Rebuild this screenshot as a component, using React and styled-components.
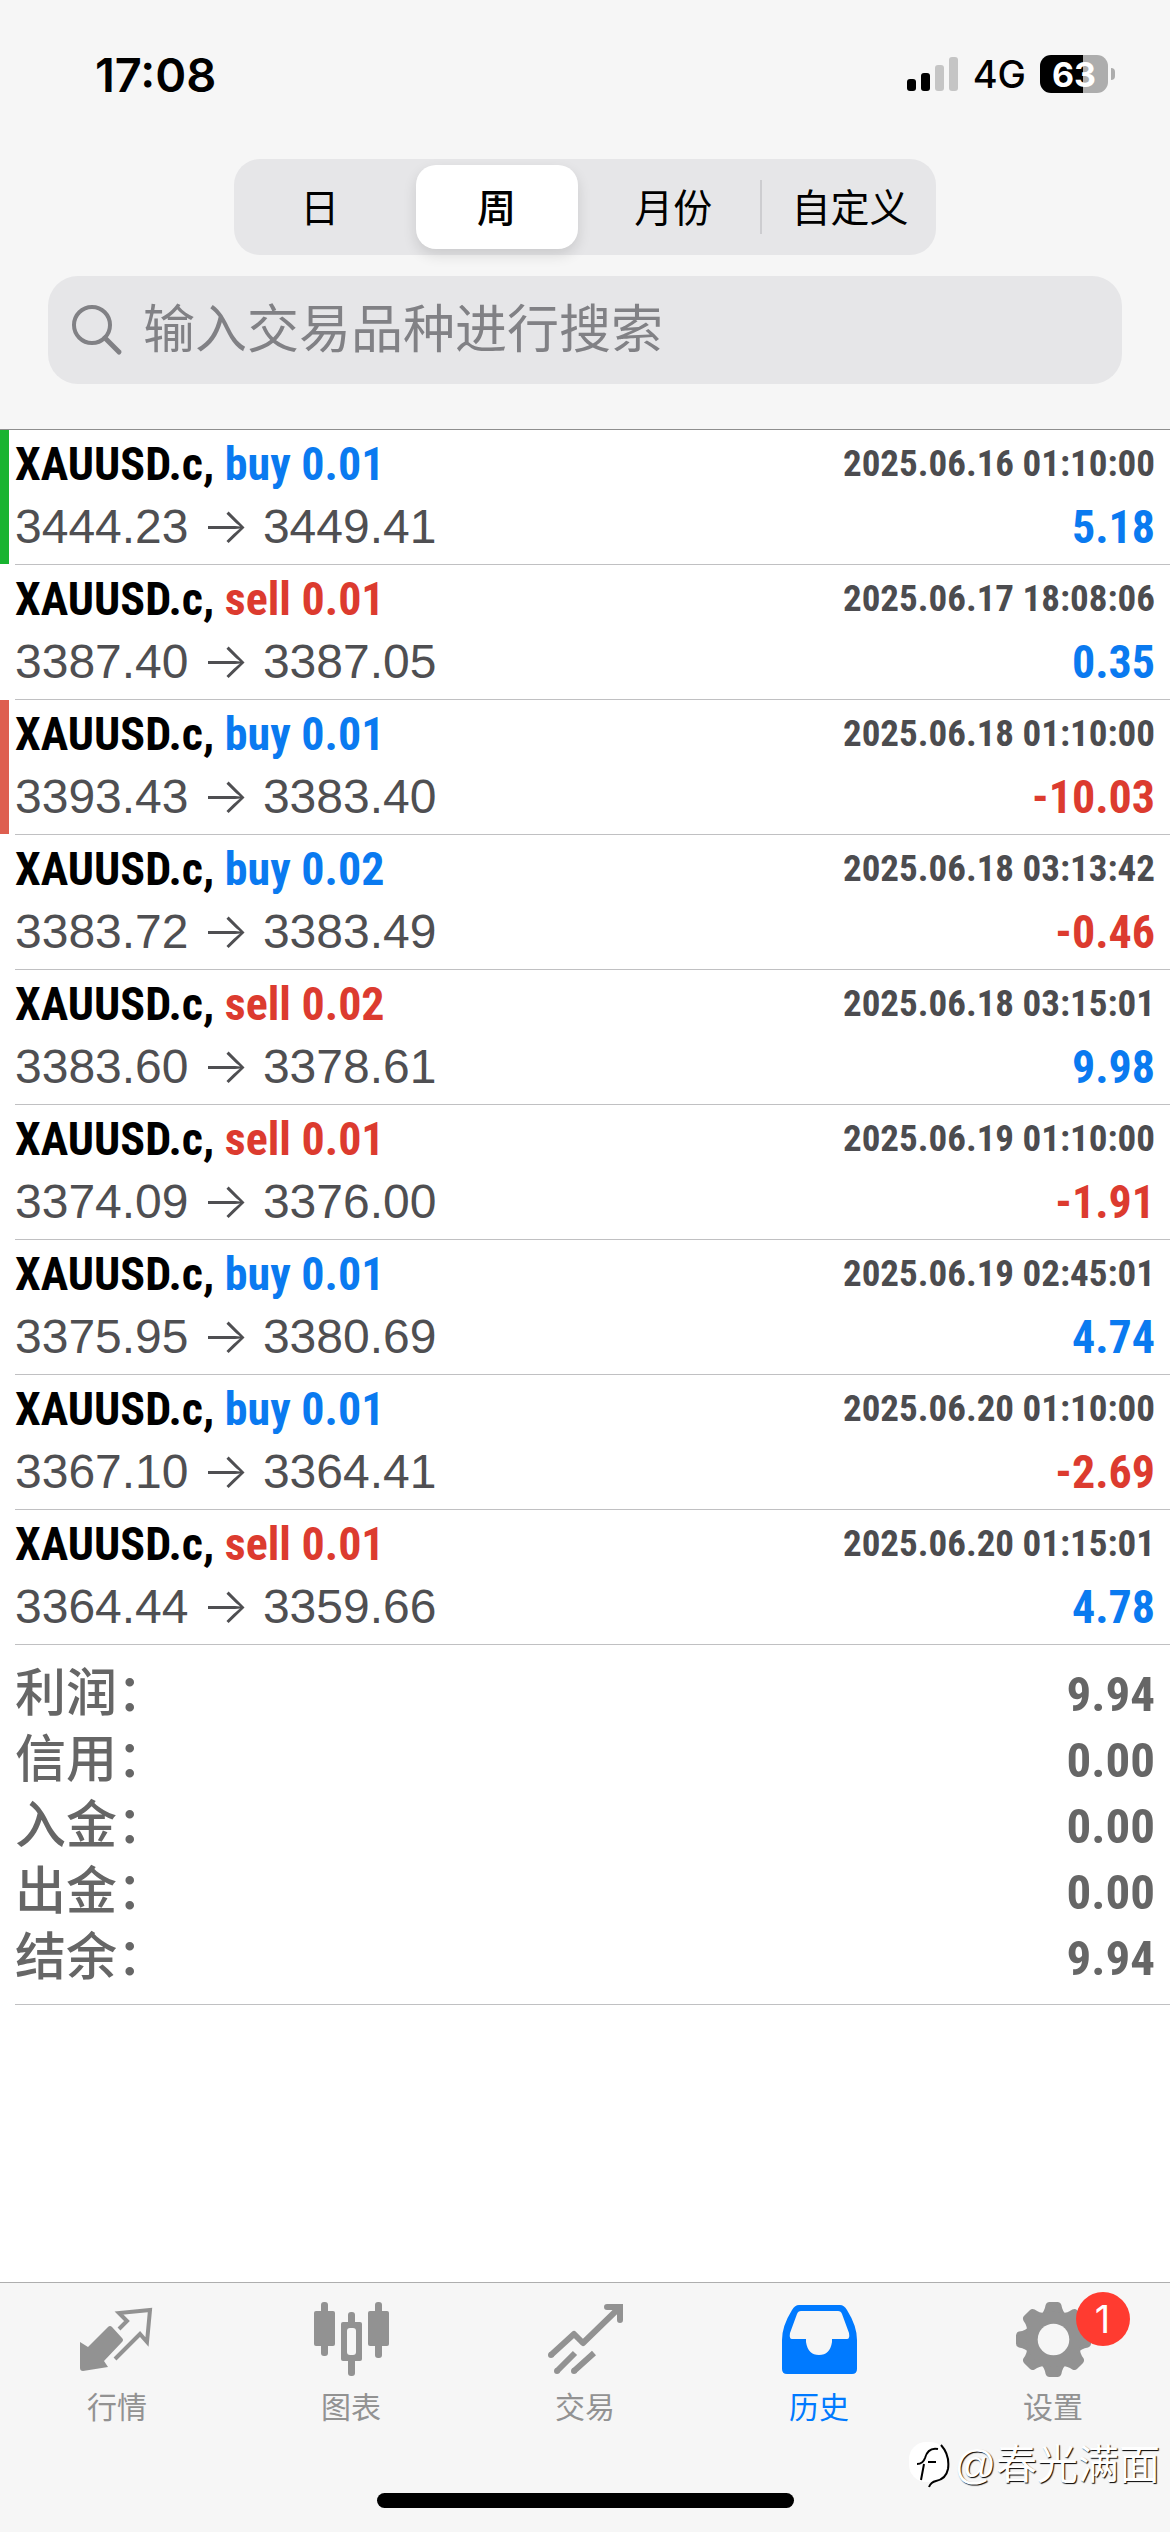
import React, { useState } from "react";
import styled, { createGlobalStyle, css } from "styled-components";

const GlobalStyle = createGlobalStyle`
  * {
    box-sizing: border-box;
  }

  body {
    margin: 0;
    background-color: white;
    font-family: "Liberation Sans", "Noto Sans CJK SC", sans-serif;
  }

  button,
  input {
    font-family: inherit;
    border: none;
    padding: 0;
    margin: 0;
    background: none;
  }
`;

const BLUE = "#0a7af0";
const RED = "#dc3b2f";

const condensed = css`
  font-family: "Roboto Condensed", "Liberation Sans", sans-serif;
  font-weight: 700;
`;

const Page = styled.div`
  position: relative;
  display: flex;
  flex-direction: column;
  min-height: 100vh;
`;

const Header = styled.header`
  background-color: #f6f6f6;
  border-bottom: 1px solid #8e8e8e;
  padding-bottom: 45px;
`;

const StatusBar = styled.div`
  display: flex;
  align-items: center;
  justify-content: space-between;
  height: 148px;
  padding: 0 55px 0 95px;
  font-family: Inter, sans-serif;
`;

const Clock = styled.time`
  font-size: 47px;
  font-weight: 600;
`;

const StatusIcons = styled.div`
  display: flex;
  align-items: center;
  gap: 14px;
`;

const Network = styled.span`
  font-size: 38px;
  font-weight: 500;
`;

const Battery = styled.div`
  display: flex;
  align-items: center;
  gap: 3px;

  &::after {
    content: "";
    width: 4px;
    height: 12px;
    border-radius: 0 6px 6px 0;
    background-color: #adadad;
  }
`;

const BatteryBody = styled.div`
  display: flex;
  align-items: center;
  justify-content: center;
  width: 68px;
  height: 38px;
  border-radius: 11px;
  background: linear-gradient(to right, black 63%, #adadad 63%);
  color: white;
  font-size: 34px;
  font-weight: 700;
`;

const Segments = styled.div`
  display: grid;
  grid-template-columns: repeat(4, 1fr);
  gap: 15px;
  width: 60%;
  height: 96px;
  margin: 11px auto 21px;
  padding: 6px 5px;
  border-radius: 26px;
  background-color: #e6e6e8;
`;

const Segment = styled.button`
  position: relative;
  padding-bottom: 4px;
  border-radius: 20px;
  font-size: 39px;
  white-space: nowrap;
  color: black;
  cursor: pointer;

  ${({ $divided }) =>
    $divided &&
    css`
      &::before {
        content: "";
        position: absolute;
        top: 15px;
        left: -9px;
        width: 2px;
        height: 54px;
        background-color: #cdcdd0;
      }
    `}

  ${({ $active }) =>
    $active &&
    css`
      background: white;
      font-weight: 500;
      box-shadow: 0 6px 14px rgba(0, 0, 0, 0.12);
    `}
`;

const SearchBox = styled.label`
  display: flex;
  align-items: center;
  gap: 20px;
  height: 108px;
  margin: 0 48px;
  padding: 0 23px;
  border-radius: 30px;
  background-color: #e6e6e8;
`;

const SearchInput = styled.input`
  flex: 1;
  min-width: 0;
  font-size: 52px;
  outline: none;

  &::placeholder {
    color: #818185;
    opacity: 1;
  }
`;

const DealList = styled.ul`
  margin: 0;
  padding: 0;
  list-style: none;
`;

const Deal = styled.li`
  display: flex;
  height: 135px;
`;

const Marker = styled.span`
  width: 9px;
  margin-right: 6px;
  margin-bottom: 1px;
  background-color: ${({ $color }) => $color || "transparent"};
`;

const DealBody = styled.div`
  flex: 1;
  padding: 2px 15px 0 0;
  border-bottom: 1px solid #c0c0c2;
`;

const Line = styled.div`
  display: flex;
  align-items: center;
  justify-content: space-between;
  height: 63px;
`;

const Symbol = styled.span`
  ${condensed}
  font-size: 46px;
`;

const Side = styled.span`
  color: ${({ $side }) => ($side === "buy" ? BLUE : RED)};
`;

const DealTime = styled.time`
  ${condensed}
  font-size: 37px;
  color: #4c4c4f;
`;

const Prices = styled.span`
  font-size: 48px;
  line-height: 56px;
  color: #4f4f52;
`;

const Arrow = styled.span`
  font-family: Inter, sans-serif;
  font-size: 50px;
  font-weight: 300;
  line-height: 1;
`;

const Profit = styled.span`
  ${condensed}
  font-size: 46px;
  color: ${({ $loss }) => ($loss ? RED : BLUE)};
`;

const Summary = styled.dl`
  margin: 0 0 0 15px;
  padding: 16px 15px 13px 0;
  border-bottom: 1px solid #c0c0c2;
`;

const SummaryRow = styled.div`
  display: flex;
  align-items: center;
  justify-content: space-between;
  height: 66px;
  color: #666;
`;

const SummaryLabel = styled.dt`
  font-size: 51px;
  font-weight: 500;
  line-height: 66px;
`;

const SummaryValue = styled.dd`
  ${condensed}
  margin: 0;
  font-size: 49px;
`;

const Footer = styled.footer`
  margin-top: auto;
  padding-bottom: 24px;
  border-top: 1px solid #aeaeae;
  background-color: #f6f6f6;
`;

const Tabs = styled.nav`
  display: grid;
  grid-template-columns: repeat(5, 1fr);
  height: 210px;
`;

const Tab = styled.button`
  display: flex;
  flex-direction: column;
  align-items: center;
  gap: 9px;
  padding-top: 19px;
  font-size: 30px;
  line-height: 44px;
  color: ${({ $active }) => ($active ? "#007aff" : "#929292")};
  cursor: pointer;
`;

const TabIcon = styled.span`
  position: relative;
  height: 75px;

  svg {
    display: block;
  }
`;

const Badge = styled.span`
  position: absolute;
  top: -10px;
  left: 60px;
  width: 54px;
  height: 54px;
  border-radius: 50%;
  background-color: #ff3b30;
  color: white;
  font-family: Inter, sans-serif;
  font-size: 38px;
  line-height: 54px;
  text-align: center;
`;

const HomeBar = styled.div`
  width: 417px;
  height: 15px;
  margin: 0 auto;
  border-radius: 8px;
  background-color: black;
`;

const Watermark = styled.div`
  position: absolute;
  right: 10px;
  bottom: 39px;
  display: flex;
  align-items: center;
  gap: 4px;
  color: white;
  font-size: 41px;
  line-height: 56px;
  text-shadow: 1px 1px 1px black;
`;

const SignalIcon = () => (
  <svg width="52" height="36" viewBox="0 0 52 36">
    <rect x="0" y="23" width="9" height="12" rx="3" />
    <rect x="14" y="17" width="9" height="18" rx="3" />
    <rect x="28" y="9" width="9" height="26" rx="3" fill="#c5c5c5" />
    <rect x="42" y="1" width="9" height="34" rx="3" fill="#c5c5c5" />
  </svg>
);

const SearchIcon = () => (
  <svg width="52" height="52" viewBox="0 0 52 52" fill="none" stroke="#818185">
    <circle cx="21" cy="21" r="18" strokeWidth="4" />
    <path d="M34 34 48 48" strokeWidth="5" strokeLinecap="round" />
  </svg>
);

const QuotesIcon = () => (
  <svg width="75" height="75" viewBox="0 0 75 75" fill="none">
    <path
      d="M0 40 8 45 28 25Q30 23 32 25L42 36Q44 38 42 40L24 59 28 65 3 69Q0 69 0 66Z"
      fill="currentColor"
    />
    <path
      d="M39 27 47 19 39 11 70 8 67 40 60 32 35 57"
      stroke="currentColor"
      strokeWidth="4"
    />
  </svg>
);

const ChartIcon = () => (
  <svg width="75" height="75" viewBox="0 0 75 75" fill="currentColor">
    <rect x="7" y="0" width="7" height="54" rx="3" />
    <rect x="0" y="9" width="21" height="35" rx="2" />
    <rect x="61" y="0" width="7" height="56" rx="3" />
    <rect x="54" y="9" width="21" height="35" rx="2" />
    <rect x="34" y="10" width="7" height="64" rx="3" />
    <rect x="27" y="20" width="21" height="39" rx="2" />
    <rect x="33" y="26" width="9" height="27" rx="3" fill="#f6f6f6" />
  </svg>
);

const TradeIcon = () => (
  <svg
    width="75"
    height="75"
    viewBox="0 0 75 75"
    fill="none"
    stroke="currentColor"
    strokeWidth="6"
  >
    <path d="M3 53 26 32 35 41 70 7" strokeLinejoin="round" />
    <path d="M59 5H72V18" strokeLinecap="round" />
    <circle cx="3" cy="53" r="3" fill="currentColor" stroke="none" />
    <path d="M9 69 27 51M26 69 46 51" />
    <circle cx="9" cy="69" r="3" fill="currentColor" stroke="none" />
    <circle cx="26" cy="69" r="3" fill="currentColor" stroke="none" />
  </svg>
);

const HistoryIcon = () => (
  <svg width="75" height="75" viewBox="0 0 75 75">
    <path
      fill="currentColor"
      fillRule="evenodd"
      d="M17 3H58Q62 3 65 8 75 24 75 38V67Q75 72 70 72H5Q0 72 0 67V38Q0 24 10 8 13 3 17 3ZM19 9Q16 9 15 12L8 31Q7 37 10 37H24V40Q26 53 37 53 48 53 50 40V37H65Q68 37 67 31L60 12Q59 9 56 9Z"
    />
  </svg>
);

const SettingsIcon = () => (
  <svg width="75" height="75" viewBox="0 0 76 76">
    <g fill="currentColor">
      {[0, 45, 90, 135, 180, 225, 270, 315].map((angle) => (
        <path
          key={angle}
          transform={`rotate(${angle} 38 38)`}
          d="M24 14Q29 10 30 3 31 0 34 0H42Q45 0 46 3 47 10 52 14L38 38Z"
        />
      ))}
      <circle cx="38" cy="38" r="28" />
    </g>
    <circle cx="38" cy="38" r="16" fill="#f6f6f6" />
  </svg>
);

const WatermarkIcon = () => (
  <svg width="42" height="48" viewBox="0 0 42 48" fill="none">
    <rect x="1" y="1" width="38" height="40" rx="17" fill="white" />
    <g stroke="black" strokeWidth="2">
      <path d="M30 8Q20 6 17 17 15 23 9 23M16 23 13 39M20 21H28" />
      <path d="M33 4Q42 14 40 28 38 38 28 40 23 41 21 46" />
    </g>
  </svg>
);

const periods = ["日", "周", "月份", "自定义"];

const deals = [
  { side: "buy", lots: "0.01", open: "3444.23", close: "3449.41", time: "2025.06.16 01:10:00", profit: "5.18", marker: "#19b431" },
  { side: "sell", lots: "0.01", open: "3387.40", close: "3387.05", time: "2025.06.17 18:08:06", profit: "0.35" },
  { side: "buy", lots: "0.01", open: "3393.43", close: "3383.40", time: "2025.06.18 01:10:00", profit: "-10.03", marker: "#de5f50" },
  { side: "buy", lots: "0.02", open: "3383.72", close: "3383.49", time: "2025.06.18 03:13:42", profit: "-0.46" },
  { side: "sell", lots: "0.02", open: "3383.60", close: "3378.61", time: "2025.06.18 03:15:01", profit: "9.98" },
  { side: "sell", lots: "0.01", open: "3374.09", close: "3376.00", time: "2025.06.19 01:10:00", profit: "-1.91" },
  { side: "buy", lots: "0.01", open: "3375.95", close: "3380.69", time: "2025.06.19 02:45:01", profit: "4.74" },
  { side: "buy", lots: "0.01", open: "3367.10", close: "3364.41", time: "2025.06.20 01:10:00", profit: "-2.69" },
  { side: "sell", lots: "0.01", open: "3364.44", close: "3359.66", time: "2025.06.20 01:15:01", profit: "4.78" },
];

const summary = [
  ["利润", "9.94"],
  ["信用", "0.00"],
  ["入金", "0.00"],
  ["出金", "0.00"],
  ["结余", "9.94"],
];

const tabs = [
  { label: "行情", Icon: QuotesIcon },
  { label: "图表", Icon: ChartIcon },
  { label: "交易", Icon: TradeIcon },
  { label: "历史", Icon: HistoryIcon },
  { label: "设置", Icon: SettingsIcon, badge: 1 },
];

function DealRow({ deal }) {
  return (
    <Deal>
      <Marker $color={deal.marker} />
      <DealBody>
        <Line>
          <Symbol>
            XAUUSD.c,{" "}
            <Side $side={deal.side}>
              {deal.side} {deal.lots}
            </Side>
          </Symbol>
          <DealTime>{deal.time}</DealTime>
        </Line>
        <Line>
          <Prices>
            {deal.open} <Arrow>→</Arrow> {deal.close}
          </Prices>
          <Profit $loss={deal.profit.startsWith("-")}>{deal.profit}</Profit>
        </Line>
      </DealBody>
    </Deal>
  );
}

function App() {
  const [period, setPeriod] = useState("周");
  const [tab, setTab] = useState("历史");

  return (
    <>
      <GlobalStyle />
      <Page lang="zh-CN">
        <Header>
          <StatusBar>
            <Clock>17:08</Clock>
            <StatusIcons>
              <SignalIcon />
              <Network>4G</Network>
              <Battery>
                <BatteryBody>63</BatteryBody>
              </Battery>
            </StatusIcons>
          </StatusBar>
          <Segments>
            {periods.map((name, i) => (
              <Segment
                key={name}
                $active={name === period}
                $divided={i > 0 && name !== period && periods[i - 1] !== period}
                onClick={() => setPeriod(name)}
              >
                {name}
              </Segment>
            ))}
          </Segments>
          <SearchBox>
            <SearchIcon />
            <SearchInput type="search" placeholder="输入交易品种进行搜索" />
          </SearchBox>
        </Header>

        <main>
          <DealList>
            {deals.map((deal) => (
              <DealRow key={deal.time} deal={deal} />
            ))}
          </DealList>
          <Summary>
            {summary.map(([label, value]) => (
              <SummaryRow key={label}>
                <SummaryLabel>{label}：</SummaryLabel>
                <SummaryValue>{value}</SummaryValue>
              </SummaryRow>
            ))}
          </Summary>
        </main>

        <Footer>
          <Tabs>
            {tabs.map(({ label, Icon, badge }) => (
              <Tab key={label} $active={label === tab} onClick={() => setTab(label)}>
                <TabIcon>
                  <Icon />
                  {badge && <Badge>{badge}</Badge>}
                </TabIcon>
                {label}
              </Tab>
            ))}
          </Tabs>
          <HomeBar />
        </Footer>

        <Watermark>
          <WatermarkIcon />
          @春光满面
        </Watermark>
      </Page>
    </>
  );
}

export default App;
